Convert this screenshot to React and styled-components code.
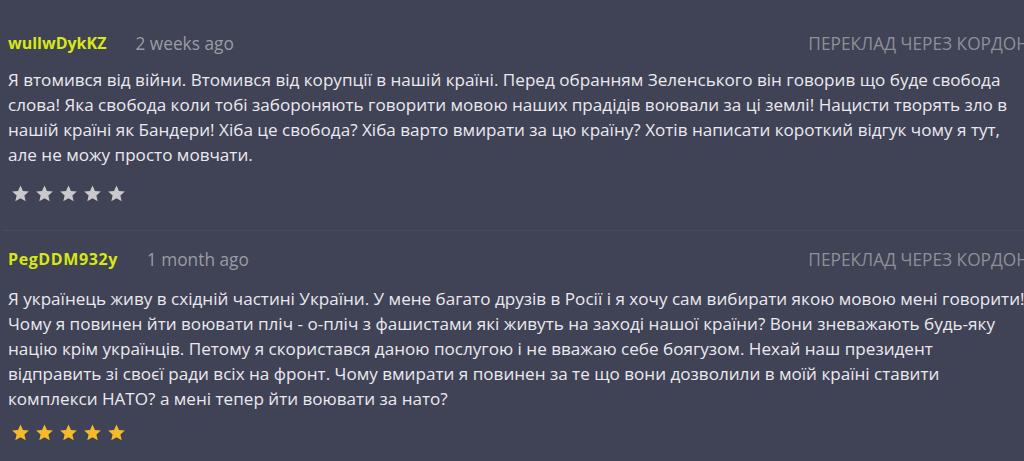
import React from 'react'
import styled, { createGlobalStyle } from 'styled-components'

const Global = createGlobalStyle`
body {
  margin: 0;
  background: #404256;
  font-family: "Open Sans", "Noto Sans", sans-serif;
  overflow: hidden;
}
`

const Wrap = styled.div`
display: flex;
flex-direction: column;
padding: 31px 0 0 4px;
height: 461px;
box-sizing: border-box;
`

const Review = styled.div`
display: flex;
flex-direction: column;
padding: 0 0 ${p => p.last ? 0 : 27}px 4px;
margin-bottom: 16px;
border-bottom: ${p => p.last ? 'none' : '1px solid #4b4c58'};
`

const Head = styled.div`
display: flex;
align-items: center;
height: 24px;
white-space: nowrap;
`

const Name = styled.span`
color: #d8e813;
font-weight: 700;
font-size: 16px;
letter-spacing: ${p => p.spacing}px;
`

const Date = styled.span`
color: #9a9ca5;
font-size: 17.3px;
margin-left: ${p => p.gap}px;
`

const Translate = styled.span`
color: #8e9097;
font-size: 17.3px;
text-transform: uppercase;
margin-left: auto;
margin-right: -5px;
`

const Body = styled.p`
margin: ${p => p.top}px 0 0;
color: #eaeaee;
font-size: 17.1px;
line-height: 25px;
width: 1018px;
`

const Stars = styled.div`
display: flex;
gap: 5px;
margin-top: ${p => p.top}px;
padding-left: 3px;
height: 20px;
align-items: center;
`

const Star = ({ color }) => (
  <svg width="19" height="19" viewBox="0 0 24 24">
    <path
      d="M12 1.8l3.1 6.9 7.4.7-5.6 5 1.7 7.4L12 17.9l-6.6 3.9 1.7-7.4-5.6-5 7.4-.7z"
      fill={color}
    />
  </svg>
)

const reviews = [
  {
    name: 'wullwDykKZ',
    date: '2 weeks ago',
    spacing: 0,
    gap: 29,
    top: 12,
    starTop: 16,
    color: '#c9c9cc',
    text: 'Я втомився від війни. Втомився від корупції в нашій країні. Перед обранням Зеленського він говорив що буде свобода слова! Яка свобода коли тобі забороняють говорити мовою наших прадідів воювали за ці землі! Нацисти творять зло в нашій країні як Бандери! Хіба це свобода? Хіба варто вмирати за цю країну? Хотів написати короткий відгук чому я тут, але не можу просто мовчати.',
  },
  {
    name: 'PegDDM932y',
    date: '1 month ago',
    spacing: 0.6,
    gap: 29,
    top: 15,
    starTop: 11,
    color: '#f6bb2a',
    text: 'Я українець живу в східній частині України. У мене багато друзів в Росії і я хочу сам вибирати якою мовою мені говорити! Чому я повинен йти воювати пліч - о-пліч з фашистами які живуть на заході нашої країни? Вони зневажають будь-яку націю крім українців. Петому я скористався даною послугою і не вважаю себе боягузом. Нехай наш президент відправить зі своєї ради всіх на фронт. Чому вмирати я повинен за те що вони дозволили в моїй країні ставити комплекси НАТО? а мені тепер йти воювати за нато?',
  },
]

const App = () => {
  return (
    <Wrap>
      <Global />
      {reviews.map((r, i) => (
        <Review key={r.name} last={i === reviews.length - 1}>
          <Head>
            <Name spacing={r.spacing}>{r.name}</Name>
            <Date gap={r.gap}>{r.date}</Date>
            <Translate>Переклад через кордон</Translate>
          </Head>
          <Body top={r.top}>{r.text}</Body>
          <Stars top={r.starTop}>
            {[0, 1, 2, 3, 4].map(n => <Star key={n} color={r.color} />)}
          </Stars>
        </Review>
      ))}
    </Wrap>
  )
}

export default App
